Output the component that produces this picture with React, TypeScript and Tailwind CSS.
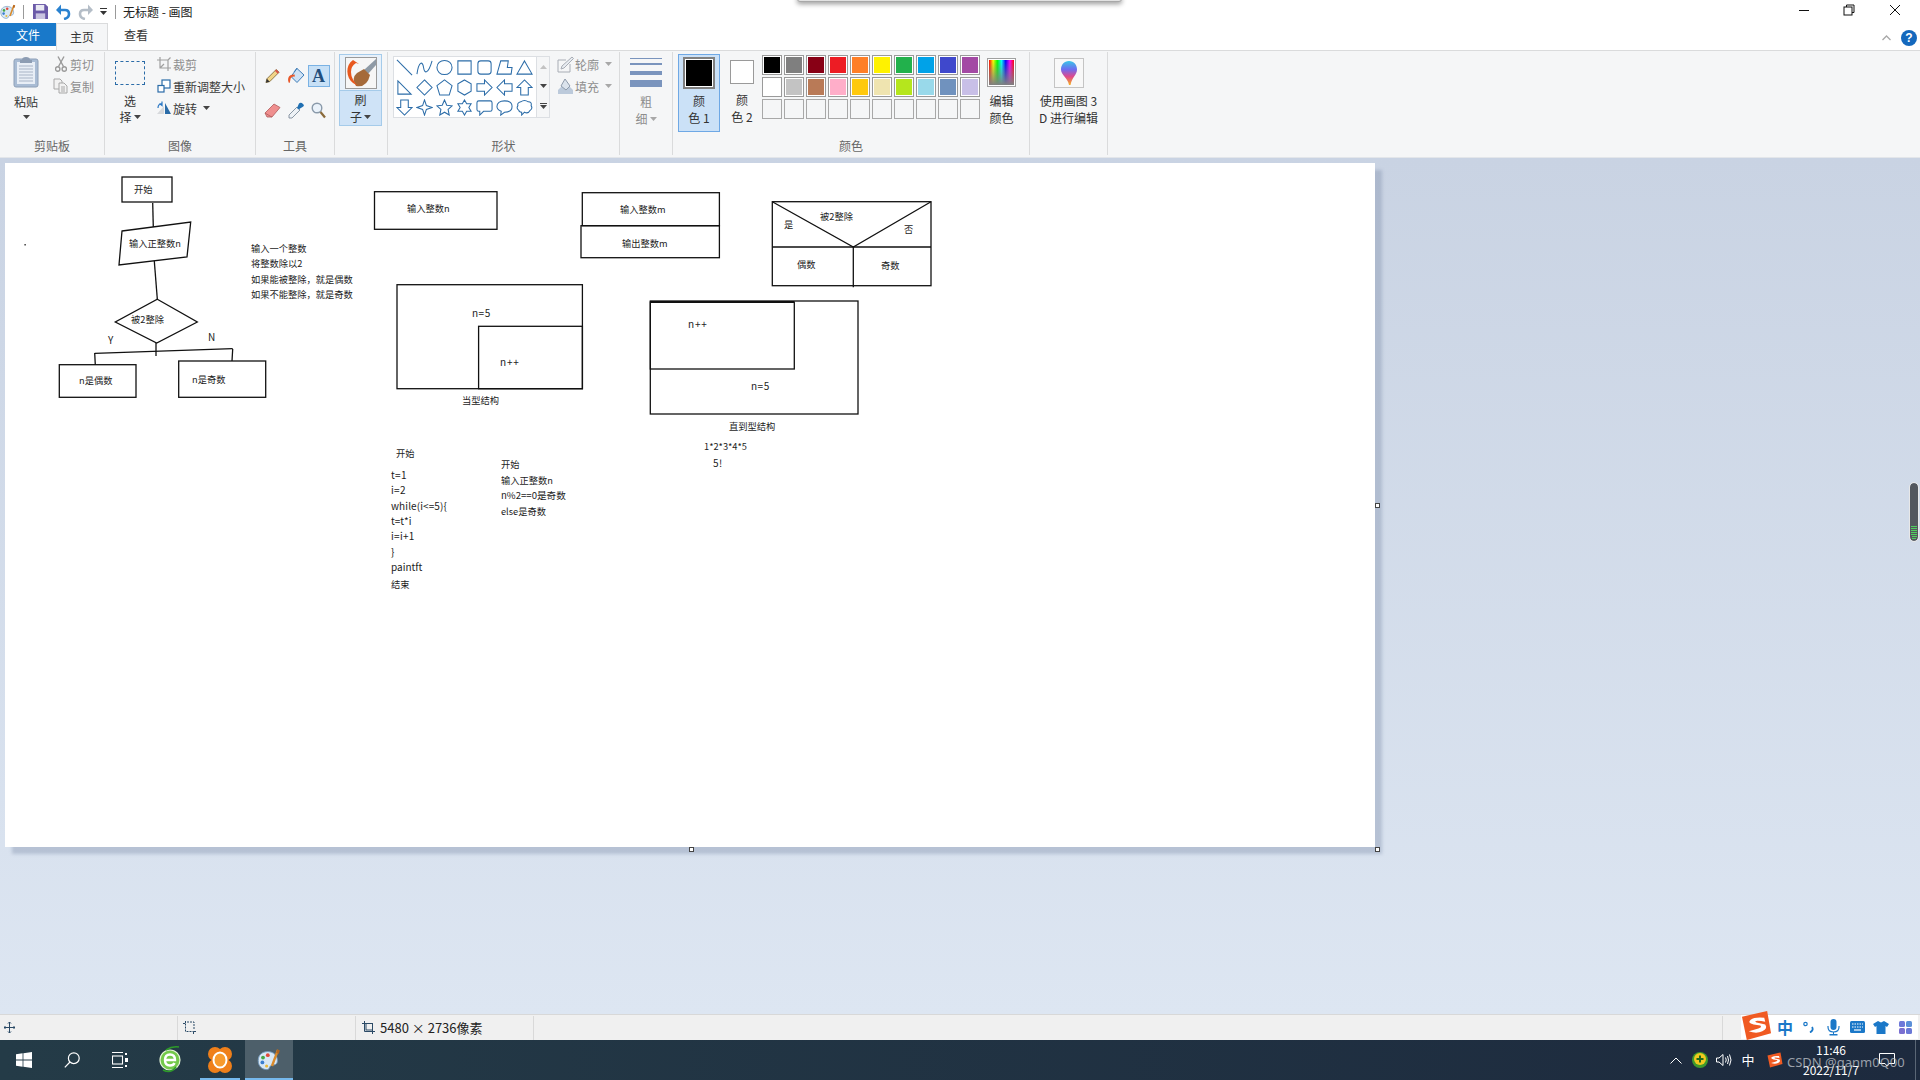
import React from "react";

const BLUE = "#2b6ca8";
const Caret = ({ c = "#444" }: { c?: string }) => (
  <svg width="7" height="4" viewBox="0 0 7 4" className="inline-block"><path d="M0 0H7L3.5 4Z" fill={c} /></svg>
);

const AppIcon = ({ size = 16 }: { size?: number }) => (
  <svg width={size} height={size} viewBox="0 0 20 20">
    <path d="M9 3C4 3 1 6 1 10.5S4 18 8 18c3 0 2-3 4-3.5s5 0 5-4S14 3 9 3Z" fill="#d8e8f5" stroke="#6f94b8" strokeWidth="0.8" />
    <circle cx="5" cy="8" r="1.6" fill="#46a546" />
    <circle cx="9" cy="6" r="1.6" fill="#e04a3a" />
    <circle cx="4.5" cy="12" r="1.6" fill="#3b7fd0" />
    <circle cx="8" cy="15" r="1.3" fill="#e9b93a" />
    <path d="M17.5 1.5L12.5 15" stroke="#d98a2b" strokeWidth="2" />
    <path d="M17 1L19 2L18 5L16 4Z" fill="#b5651d" />
  </svg>
);

const Group = ({ w, label, children }: { w: string; label?: string; children: React.ReactNode }) => (
  <div className={`${w} h-[103px] mt-[1px] border-r border-[#dadbdc] flex flex-col shrink-0`}>
    <div className="h-[87px] flex">{children}</div>
    {label ? <div className="h-[16px] leading-[14px] text-center text-[12px] text-[#666666]">{label}</div> : null}
  </div>
);

const SmallRow = ({ icon, text, off, caret }: { icon: React.ReactNode; text: string; off?: boolean; caret?: boolean }) => (
  <div className={`h-[22px] flex items-center whitespace-nowrap ${off ? "text-[#8e8e8e]" : "text-[#3b3b3b]"}`}>
    <span className="w-[17px] flex justify-center shrink-0">{icon}</span>
    <span className="ml-[1px]">{text}</span>
    {caret ? <span className="ml-[6px] flex items-center"><Caret c={off ? "#a8a8a8" : "#444"} /></span> : null}
  </div>
);

const shapes = [
  "M1 1L17 17",
  "M1 16C3 2 7 2 8 9S13 16 17 2",
  "M9 1.5C13.5 1.5 17 4.8 17 9S13.5 16.5 9 16.5S1 13.2 1 9S4.5 1.5 9 1.5Z",
  "M2 2H16V16H2Z",
  "M5 2H13Q16 2 16 5V13Q16 16 13 16H5Q2 16 2 13V5Q2 2 5 2Z",
  "M5 2H13L12 9H17L16 16H1Z",
  "M9 2L17 16H1Z",
  "M2 2L16 16H2Z",
  "M9 1L17 9L9 17L1 9Z",
  "M9 1L17 7L14 17H4L1 7Z",
  "M9 1L16 5V13L9 17L2 13V5Z",
  "M1 5H9V1L17 9L9 17V13H1Z",
  "M17 5H9V1L1 9L9 17V13H17Z",
  "M5 17V9H1L9 1L17 9H13V17Z",
  "M5 1V9H1L9 17L17 9H13V1Z",
  "M9 1L11 7L17 9L11 11L9 17L7 11L1 9L7 7Z",
  "M9 1L11.4 6.6L17 7.2L12.8 11L14 17L9 14L4 17L5.2 11L1 7.2L6.6 6.6Z",
  "M9 1L11.3 5H16L13.6 9L16 13H11.3L9 17L6.7 13H2L4.4 9L2 5H6.7Z",
  "M3 2H15Q17 2 17 4V11Q17 13 15 13H8L4 17V13H3Q1 13 1 11V4Q1 2 3 2Z",
  "M9 2C14 2 17 4.5 17 8S14 14 9 14L5 17L5.5 13C3 12 1 10 1 8C1 4.5 4 2 9 2Z",
  "M5 3Q9 0 13 3Q17 3 16 7Q18 10 15 12Q13 16 9 14L6 17L6 14Q3 14 3 12Q0 10 2 7Q1 4 5 3Z",
];

const row1 = ["#000000", "#7f7f7f", "#880015", "#ed1c24", "#ff7f27", "#fff200", "#22b14c", "#00a2e8", "#3f48cc", "#a349a4"];
const row2 = ["#ffffff", "#c3c3c3", "#b97a57", "#ffaec9", "#ffc90e", "#efe4b0", "#b5e61d", "#99d9ea", "#7092be", "#c8bfe7"];
const empties = ["a", "b", "c", "d", "e", "f", "g", "h", "i", "j"];

const PasteIcon = () => (
  <svg width="26" height="32" viewBox="0 0 26 32">
    <rect x="1" y="3" width="24" height="28" rx="2" fill="#a9bcd4" stroke="#8ea0b8" />
    <rect x="4" y="6" width="18" height="22" fill="#e8eef6" />
    <path d="M6 10H20M6 13H20M6 16H20M6 19H20M6 22H20M6 25H20" stroke="#a8b4c6" strokeWidth="1" />
    <path d="M9 4Q9 1 13 1T17 4L19 4V7H7V4Z" fill="#8d9db3" />
  </svg>
);

const Scissors = () => (
  <svg width="12" height="16" viewBox="0 0 12 16" fill="none" stroke="#9a9a9a" strokeWidth="1.4">
    <path d="M3 0.5L8.5 10.5M9 0.5L3.5 10.5" />
    <circle cx="2.7" cy="13" r="2.2" />
    <circle cx="9.3" cy="13" r="2.2" />
  </svg>
);
const CopyIcon = () => (
  <svg width="15" height="16" viewBox="0 0 15 16" fill="#f2f2f2" stroke="#a8a8a8">
    <path d="M1 1H7L9 3V11H1Z" />
    <path d="M6 5H11L14 8V15H6Z" />
    <path d="M8 9H12M8 11H12M8 13H12" />
  </svg>
);
const CropIcon = () => (
  <svg width="14" height="14" viewBox="0 0 14 14" fill="none" stroke="#a0a0a0" strokeWidth="1.2">
    <path d="M3 0V11H14M0 3H11V14M11 3L13.5 0.5M3 11L7 7" />
  </svg>
);
const ResizeIcon = () => (
  <svg width="14" height="14" viewBox="0 0 14 14" fill="#fff" stroke="#2b6ca8" strokeWidth="1.2">
    <rect x="5" y="1" width="8" height="8" />
    <rect x="1" y="6.5" width="6" height="6.5" />
  </svg>
);
const RotateIcon = () => (
  <svg width="16" height="14" viewBox="0 0 16 14">
    <path d="M9 2L15 13H9Z" fill="#2b6ca8" />
    <path d="M8 13H1L8 5Z" fill="#d7d9dc" />
    <path d="M2 7Q2 3 6 2.5M6 0.5V4.5L3.5 2.5" stroke="#2b78c4" strokeWidth="1.2" fill="none" />
  </svg>
);
const Pencil = () => (
  <svg width="15" height="16" viewBox="0 0 16 16">
    <path d="M12 1L15 4L5 14L1 15L2 11Z" fill="#f1d489" stroke="#6e5a2e" strokeWidth="0.8" />
    <path d="M12 1L15 4L13.5 5.5L10.5 2.5Z" fill="#d9534a" />
    <path d="M2 11L5 14L1 15Z" fill="#333" />
  </svg>
);
const Bucket = () => (
  <svg width="18" height="18" viewBox="0 0 18 18">
    <path d="M10 1.5L17 8L10 15.5L4 9.5Z" fill="#cfe2f5" stroke="#3f7db8" />
    <path d="M7 5L10 1" stroke="#3f7db8" />
    <path d="M1.5 15C0 10 3 7 7.5 7.5L8 9.5Q4 9 3.5 12T2.8 15.5Q2 16.5 1.5 15Z" fill="#e8582a" />
  </svg>
);
const AIcon = () => (
  <span className="w-[22px] h-[22px] bg-[#c7e0f6] border border-[#7ab2e4] flex items-center justify-center text-[18px] font-bold text-[#1f4e7d] [font-family:'Liberation_Serif',serif] leading-none">A</span>
);
const Eraser = () => (
  <svg width="17" height="15" viewBox="0 0 17 15">
    <path d="M10 1L16 4.5L8 14H3L1 10Z" fill="#ef8f8f" stroke="#b05a5a" strokeWidth="0.8" />
    <path d="M1 10L6 13L8 14" stroke="#b05a5a" fill="none" strokeWidth="0.8" />
  </svg>
);
const Dropper = () => (
  <svg width="16" height="17" viewBox="0 0 16 17">
    <path d="M9 5L12 8L4 16H1V13Z" fill="#eef2f6" stroke="#6e7f90" strokeWidth="0.8" />
    <path d="M9 6L11 1.5Q13 0 15 2T14.5 5L10.5 7.5Z" fill="#1f6fb2" />
  </svg>
);
const Magnifier = () => (
  <svg width="15" height="17" viewBox="0 0 15 17" fill="none">
    <circle cx="6" cy="6" r="4.8" fill="#eaf2fa" stroke="#8a9aaa" strokeWidth="1.4" />
    <path d="M9.5 10L14 15.5" stroke="#8a6a3a" strokeWidth="2.2" />
  </svg>
);
const BrushIcon = () => (
  <svg width="32" height="32" viewBox="0 0 32 32">
    <rect x="0.5" y="0.5" width="31" height="31" fill="#f6f6f6" stroke="#9a9a9a" />
    <path d="M31 2L19 13L23 17L31 8Z" fill="#8e9aa6" />
    <path d="M19 12L12 16Q6 21 11 29Q22 31 25 18Z" fill="#a56a3a" />
    <path d="M8 3C0 8 1 21 8 26L13 29Q6 22 6 15Q6 9 11 6L14 7Z" fill="#e8581e" />
  </svg>
);
const OutlineIcon = () => (
  <svg width="17" height="17" viewBox="0 0 17 17" fill="none" stroke="#a8adb5">
    <path d="M1 4H9M1 4V16H13V8" />
    <path d="M15 1L16.5 2.5L7 12L4 13L5 10Z" fill="#e8ecf1" />
  </svg>
);
const FillIcon = () => (
  <svg width="17" height="17" viewBox="0 0 17 17">
    <path d="M1 16V12L4 9H13L16 12V16Z" fill="#bccadb" />
    <path d="M8 1L13 8L9 12L4 8Z" fill="#dbe3ec" stroke="#8e9bab" />
  </svg>
);
const Balloon = () => (
  <svg width="18" height="26" viewBox="0 0 18 26">
    <defs>
      <linearGradient id="bal" x1="0" y1="0" x2="0" y2="1">
        <stop offset="0" stopColor="#39c6e8" />
        <stop offset="0.35" stopColor="#6e6cf0" />
        <stop offset="0.65" stopColor="#e0488c" />
        <stop offset="1" stopColor="#f5b21e" />
      </linearGradient>
    </defs>
    <path d="M9 1C14 1 17 5 17 9.5C17 15 12 17 10.5 25H9C8 18 1 15 1 9.5C1 5 4 1 9 1Z" fill="url(#bal)" />
  </svg>
);

const SogouS = ({ size }: { size: number }) => (
  <svg width={size} height={size} viewBox="0 0 32 32">
    <path d="M1 7L27 1L31 24L6 31Z" fill="#f05a22" />
    <path d="M24 8Q14 7 10 10T13 15L20 16Q22 18 18 19T8 22Q16 25 22 22T25 15L16 13Q13 11 17 11T25 12Z" fill="#ffffff" />
  </svg>
);

const T = ({ x, y, s, size = 9.25, ls = 0 }: { x: number; y: number; s: string; size?: number; ls?: number }) => (
  <text x={x} y={y + 3.4} fontSize={size} letterSpacing={ls} fill="#1c1c1c">{s}</text>
);
const Rect = ({ x1, y1, x2, y2, w = 1.3 }: { x1: number; y1: number; x2: number; y2: number; w?: number }) => (
  <rect x={x1} y={y1} width={x2 - x1} height={y2 - y1} fill="none" stroke="#111" strokeWidth={w} />
);

const Diagram = () => (
  <svg className="block" width="1370" height="684" viewBox="5 163 1370 684" fontFamily="'Noto Sans CJK SC','Noto Sans',sans-serif">
    <g fill="none" stroke="#111" strokeWidth="1.3">
      <path d="M152.7 203L153.3 227" />
      <path d="M122 231L190.7 222L187 257L119 265Z" />
      <path d="M154.3 261L157.3 299" />
      <path d="M157.3 299.3L197.3 322L156.7 343L115.3 322Z" />
      <path d="M156 343V356" />
      <path d="M94.7 353.3L232.7 348.7" />
      <path d="M94.7 353L95.3 365M232.7 349L232 361" />
      <path d="M772.3 201.7L853.3 247L931 201.7" />
      <path d="M772.3 247H931M853.3 247V287.3" />
      <path d="M650.3 302H794" strokeWidth="2" />
    </g>
    <Rect x1={122} y1={177} x2={172} y2={202} />
    <Rect x1={59.3} y1={364.7} x2={136} y2={397.3} />
    <Rect x1={178.7} y1={361} x2={265.7} y2={397.3} />
    <Rect x1={374.5} y1={191.7} x2={497} y2={229.3} />
    <Rect x1={582.3} y1={192.7} x2={719.4} y2={225.7} />
    <Rect x1={581} y1={225.7} x2={719.4} y2={257.7} />
    <Rect x1={772.3} y1={201.7} x2={931} y2={285.7} />
    <Rect x1={397} y1={284.7} x2={582.4} y2={388.7} />
    <Rect x1={478.6} y1={326.3} x2={582.4} y2={388.7} />
    <Rect x1={650.3} y1={301} x2={858} y2={414} />
    <Rect x1={650.3} y1={302} x2={794.3} y2={369} />
    <rect x="24.5" y="244" width="1.2" height="1.5" fill="#111" />

    <T x={134} y={190} s="开始" />
    <T x={129} y={244} s="输入正整数n" />
    <T x={131} y={320} s="被2整除" />
    <T x={108} y={341} s="Y" size={10} />
    <T x={208} y={338} s="N" size={10} />
    <T x={79} y={381} s="n是偶数" />
    <T x={192} y={380} s="n是奇数" />
    <T x={251} y={248.5} s="输入一个整数" />
    <T x={251} y={264} s="将整数除以2" />
    <T x={251} y={280} s="如果能被整除，就是偶数" />
    <T x={251} y={295} s="如果不能整除，就是奇数" />
    <T x={407} y={209} s="输入整数n" />
    <T x={620} y={210} s="输入整数m" />
    <T x={622} y={244} s="输出整数m" />
    <T x={820} y={217} s="被2整除" />
    <T x={784} y={225} s="是" />
    <T x={904} y={230} s="否" />
    <T x={797} y={265} s="偶数" />
    <T x={881} y={266} s="奇数" />
    <T x={472} y={314} s="n=5" size={10} ls={0.5} />
    <T x={500} y={363} s="n++" size={10} ls={0.8} />
    <T x={462} y={401} s="当型结构" />
    <T x={688} y={325} s="n++" size={10} ls={0.8} />
    <T x={751} y={387} s="n=5" size={10} ls={0.5} />
    <T x={729} y={427} s="直到型结构" />
    <T x={704} y={447} s="1*2*3*4*5" />
    <T x={713} y={464} s="5!" size={10} ls={0.5} />
    <T x={396} y={454} s="开始" />
    <T x={391} y={476} s="t=1" size={10} ls={0.3} />
    <T x={391} y={491} s="i=2" size={10} ls={0.3} />
    <T x={391} y={507} s="while(i<=5){" size={10} ls={0.1} />
    <T x={391} y={522} s="t=t*i" size={10} />
    <T x={391} y={537} s="i=i+1" size={10} ls={0.3} />
    <T x={391} y={553} s="}" size={10} />
    <T x={391} y={568} s="paintft" size={10} />
    <T x={391} y={585} s="结束" />
    <T x={501} y={465} s="开始" />
    <T x={501} y={481} s="输入正整数n" />
    <T x={501} y={496} s="n%2==0是奇数" size={9.6} />
    <T x={501} y={512} s="else是奇数" />
  </svg>
);

const Handle = ({ cls }: { cls: string }) => (
  <div className={`absolute w-[5px] h-[5px] bg-white border border-[#444] ${cls}`} />
);

export default function App() {
  return (
    <div className="w-[1920px] h-[1080px] overflow-hidden flex flex-col bg-white relative text-[12px] text-[#3b3b3b] [font-family:'Noto_Sans_CJK_SC','Noto_Sans',sans-serif]">
      {/* Title bar */}
      <div className="h-[23px] flex items-center shrink-0 relative">
        <span className="w-[23px] flex"><AppIcon /></span>
        <span className="w-px h-[14px] bg-[#9a9a9a]" />
        <svg className="ml-[9px]" width="15" height="15" viewBox="0 0 16 16">
          <path d="M0 0H13L16 3V16H0Z" fill="#6b5aa8" />
          <rect x="3" y="1" width="9" height="6" fill="#e8e8f2" />
          <rect x="3" y="10" width="10" height="6" fill="#c9c4e0" />
        </svg>
        <svg className="ml-[8px]" width="15" height="16" viewBox="0 0 15 16" fill="none">
          <path d="M2 6H9Q13 6 13 10T8 15" stroke="#2a82d0" strokeWidth="2.6" />
          <path d="M5 0.5V11L0 6Z" fill="#2a82d0" />
        </svg>
        <svg className="ml-[7px]" width="15" height="16" viewBox="0 0 15 16" fill="none">
          <path d="M13 6H6Q2 6 2 10T7 15" stroke="#b4bdc7" strokeWidth="2.6" />
          <path d="M10 0.5V11L15 6Z" fill="#b4bdc7" />
        </svg>
        <span className="ml-[7px] flex flex-col items-center gap-[2px] w-[7px]">
          <span className="w-[7px] h-px bg-[#333]" />
          <Caret c="#333" />
        </span>
        <span className="ml-[8px] w-px h-[14px] bg-[#9a9a9a]" />
        <span className="ml-[7px] text-[12px] text-[#222]">无标题 - 画图</span>
        <div className="ml-auto flex items-center h-[23px] pb-[3px]">
          <svg width="12" height="12" viewBox="0 0 12 12"><path d="M1 6.5H11" stroke="#111" strokeWidth="1" /></svg>
          <svg className="ml-[33px]" width="12" height="12" viewBox="0 0 12 12" fill="none" stroke="#111">
            <rect x="1" y="3" width="8" height="8" />
            <path d="M3.5 3V1H11V8.5H9" />
          </svg>
          <svg className="ml-[34px] mr-[19px]" width="12" height="12" viewBox="0 0 12 12"><path d="M1 1L11 11M11 1L1 11" stroke="#111" /></svg>
        </div>
        <div className="absolute left-[797px] top-[-4px] w-[325px] h-[6px] bg-[#e2e2e2] border border-[#a8a8a8] rounded-b-[3px] shadow-[0_2px_5px_rgba(0,0,0,0.4)]" />
      </div>

      {/* Tabs */}
      <div className="h-[27px] flex items-start shrink-0 relative">
        <div className="w-[56px] h-[23px] bg-[#1979ca] text-white flex items-center justify-center text-[12px]">文件</div>
        <div className="w-[52px] h-[27px] bg-[#f5f6f7] border border-b-0 border-[#dadbdc] flex items-center justify-center text-[12px] text-[#333] relative z-10">主页</div>
        <div className="w-[56px] h-[23px] flex items-center justify-center text-[12px] text-[#333]">查看</div>
        <div className="ml-auto flex items-center h-[26px] pt-[3px]">
          <svg width="9" height="6" viewBox="0 0 9 6"><path d="M0.5 5L4.5 1L8.5 5" fill="none" stroke="#a8a8a8" strokeWidth="1.3" /></svg>
          <span className="ml-[10px] mr-[3px] w-[16px] h-[16px] rounded-full bg-[#1468bd] text-white text-[12px] font-bold flex items-center justify-center leading-none [font-family:'Liberation_Sans',sans-serif]">?</span>
        </div>
      </div>

      {/* Ribbon */}
      <div className="h-[108px] shrink-0 bg-[#f5f6f7] border-t border-[#dadbdc] border-b border-b-[#e3e6ea] flex text-[12px] leading-[17px]">
        <Group w="w-[105px]" label="剪贴板">
          <div className="w-[52px] flex flex-col items-center pt-[4px]">
            <PasteIcon />
            <span className="mt-[5px] text-[#333]">粘贴</span>
            <span className="mt-[5px] flex"><Caret /></span>
          </div>
          <div className="pt-[1px]">
            <SmallRow off icon={<Scissors />} text="剪切" />
            <SmallRow off icon={<CopyIcon />} text="复制" />
          </div>
        </Group>
        <Group w="w-[151px]" label="图像">
          <div className="w-[50px] flex flex-col items-center pt-[9px] leading-[16px] text-[#333]">
            <div className="w-[30px] h-[24px] border border-dashed border-[#2b6ca8]" />
            <span className="mt-[8px]">选</span>
            <span className="flex items-center gap-[2px]">择<Caret /></span>
          </div>
          <div className="pt-[1px]">
            <SmallRow off icon={<CropIcon />} text="裁剪" />
            <SmallRow icon={<ResizeIcon />} text="重新调整大小" />
            <SmallRow icon={<RotateIcon />} text="旋转" caret />
          </div>
        </Group>
        <Group w="w-[79px]" label="工具">
          <div className="pl-[5px] pt-[7px] grid grid-cols-[23px_23px_23px] grid-rows-[34px_34px] items-center justify-items-center">
            <Pencil />
            <Bucket />
            <AIcon />
            <Eraser />
            <Dropper />
            <Magnifier />
          </div>
        </Group>
        <Group w="w-[53px]">
          <div className="ml-[4px] mt-[2px] w-[43px] h-[72px] border border-[#a5cbea] flex flex-col">
            <div className="h-[36px] flex items-center justify-center bg-[#e8f1fa] border-b border-[#a5cbea]"><BrushIcon /></div>
            <div className="flex-1 bg-[#cfe3f7] flex flex-col items-center leading-[17px] text-[#333]">
              <span>刷</span>
              <span className="flex items-center gap-[2px]">子<Caret /></span>
            </div>
          </div>
        </Group>
        <Group w="w-[232px]" label="形状">
          <div className="ml-[5px] mt-[4px] h-[62px] w-[157px] flex border border-[#dcdfe3]">
            <div className="w-[142px] bg-white grid grid-cols-[repeat(7,20px)] auto-rows-[20px]">
              {shapes.map((d) => (
                <span key={d} className="flex items-center justify-center">
                  <svg width="17" height="17" viewBox="0 0 18 18"><path d={d} fill="none" stroke={BLUE} strokeWidth="1.1" /></svg>
                </span>
              ))}
            </div>
            <div className="flex-1 border-l border-[#dcdfe3] flex flex-col items-center justify-around">
              <svg width="7" height="4" viewBox="0 0 7 4"><path d="M0 4H7L3.5 0Z" fill="#c2c2c2" /></svg>
              <Caret />
              <span className="flex flex-col items-center gap-[1px]"><span className="w-[7px] h-px bg-[#444]" /><Caret /></span>
            </div>
          </div>
          <div className="ml-[7px] pt-[1px]">
            <SmallRow off icon={<OutlineIcon />} text="轮廓" caret />
            <SmallRow off icon={<FillIcon />} text="填充" caret />
          </div>
        </Group>
        <Group w="w-[53px]">
          <div className="w-full flex flex-col">
            <div className="ml-[10px] w-[32px] mt-[6px] flex flex-col">
              <span className="h-px bg-[#7a94bd]" />
              <span className="h-[2px] mt-[4px] bg-[#7a94bd]" />
              <span className="h-[4px] mt-[6px] bg-[#7a94bd]" />
              <span className="h-[7px] mt-[5px] bg-[#7a94bd]" />
            </div>
            <span className="mt-[6px] text-center text-[#8e8e8e] leading-[17px]">粗</span>
            <span className="text-center text-[#8e8e8e] leading-[17px] flex items-center justify-center gap-[2px]">细<Caret c="#a8a8a8" /></span>
          </div>
        </Group>
        <Group w="w-[357px]" label="颜色">
          <div className="ml-[5px] mt-[2px] w-[42px] h-[78px] bg-[#cbe1f7] border border-[#6ea8e5] flex flex-col items-center pt-[2px]">
            <div className="w-[32px] h-[32px] bg-black border-2 border-[#808080] shadow-[inset_0_0_0_1px_#fff]" />
            <span className="mt-[3px] leading-[17px] text-[#333]">颜</span>
            <span className="leading-[17px] text-[#333]">色 1</span>
          </div>
          <div className="w-[40px] ml-[2px] flex flex-col items-center pt-[8px]">
            <div className="w-[24px] h-[24px] bg-white border border-[#9a9a9a]" />
            <span className="mt-[7px] leading-[17px] text-[#333]">颜</span>
            <span className="leading-[17px] text-[#333]">色 2</span>
          </div>
          <div className="mt-[3px] grid grid-cols-[repeat(10,22px)] auto-rows-[22px]">
            {row1.concat(row2).map((c, i) => (
              <span key={c + i} className="w-[20px] h-[20px] border border-[#9a9a9a] p-px bg-white">
                <span className="block w-full h-full" style={{ background: c }} />
              </span>
            ))}
            {empties.map((k) => (
              <span key={k} className="w-[20px] h-[20px] border border-[#a8a8a8] bg-[#f5f6f7]" />
            ))}
          </div>
          <div className="ml-[2px] w-[35px] flex flex-col items-center pt-[6px]">
            <div className="w-[29px] h-[29px] border border-[#a0a0a0] p-px bg-white">
              <div className="w-full h-full bg-[linear-gradient(to_bottom,transparent,#808080),linear-gradient(to_right,#f00,#ff0,#0f0,#0ff,#00f,#f0f,#f00)]" />
            </div>
            <span className="mt-[5px] leading-[17px] text-[#333]">编辑</span>
            <span className="leading-[17px] text-[#333]">颜色</span>
          </div>
        </Group>
        <Group w="w-[78px]">
          <div className="w-full flex flex-col items-center pt-[6px] text-[#333]">
            <div className="w-[30px] h-[30px] bg-[#f8f8f8] border border-[#c4c4c4] flex items-center justify-center"><Balloon /></div>
            <span className="mt-[4px] leading-[17px] whitespace-nowrap">使用画图 3</span>
            <span className="leading-[17px] whitespace-nowrap">D 进行编辑</span>
          </div>
        </Group>
      </div>

      {/* Work area */}
      <div className="flex-1 relative overflow-hidden bg-linear-to-b from-[#c9d3e3] to-[#dde6f2] pl-[5px] pt-[5px]">
        <div className="relative w-[1370px] h-[684px] bg-white shadow-[7px_7px_3px_rgba(130,146,172,0.4)]">
          <Diagram />
          <Handle cls="left-[1370px] top-[340px]" />
          <Handle cls="left-[684px] top-[684px]" />
          <Handle cls="left-[1370px] top-[684px]" />
        </div>
        <div className="absolute left-[1910px] top-[325px] w-[8px] h-[58px] rounded-[4px] bg-[#53575e] outline outline-1 outline-[#e8e8e8] flex flex-col justify-end items-center gap-[1px] pb-[2px]">
          <span className="w-[6px] h-px bg-[#4fd05f]" />
          <span className="w-[6px] h-px bg-[#4fd05f]" />
          <span className="w-[6px] h-px bg-[#4fd05f]" />
          <span className="w-[6px] h-px bg-[#4fd05f]" />
          <span className="w-[6px] h-px bg-[#4fd05f]" />
          <span className="w-[5px] h-px bg-[#4fd05f]" />
          <span className="w-[4px] h-px bg-[#4fd05f]" />
        </div>
      </div>

      {/* Status bar */}
      <div className="h-[26px] shrink-0 bg-[#f0f0f0] border-t border-[#d8d8d8] flex items-center relative text-[#222]">
        <div className="w-[178px] h-[24px] border-r border-[#d9d9d9] flex items-center pl-[4px]">
          <svg width="11" height="11" viewBox="0 0 11 11" fill="none" stroke="#2b4a66"><path d="M5.5 0V11M0 5.5H11M4 1.5L5.5 0L7 1.5M4 9.5L5.5 11L7 9.5M1.5 4L0 5.5L1.5 7M9.5 4L11 5.5L9.5 7" /></svg>
        </div>
        <div className="w-[178px] h-[24px] border-r border-[#d9d9d9] flex items-center pl-[5px]">
          <svg width="13" height="13" viewBox="0 0 13 13" fill="none" stroke="#2b4a66"><path d="M0 2.5H2.5V0M2.5 2.5V10.5H10.5M4 1H11V9" strokeDasharray="2 1" /><path d="M10.5 13V10.5H13" /></svg>
        </div>
        <div className="w-[178px] h-[24px] border-r border-[#d9d9d9] flex items-center pl-[6px]">
          <svg width="13" height="13" viewBox="0 0 13 13" fill="none" stroke="#2b4a66"><path d="M2.5 0V10.5H13M0 2.5H10.5V13" /><rect x="4" y="2.5" width="6.5" height="6.5" /></svg>
          <span className="ml-[5px] text-[13px] whitespace-nowrap leading-none">5480 × 2736像素</span>
        </div>
        <div className="ml-[1188px] w-px h-[24px] bg-[#d9d9d9]" />
        <div className="absolute left-[1741px] top-0 w-[177px] h-[24px] bg-white flex items-center pl-[32px]">
          <span className="w-[24px] flex justify-center text-[16px] font-bold text-[#1b78c8] leading-none">中</span>
          <span className="w-[24px] flex justify-center">
            <svg width="12" height="12" viewBox="0 0 12 12"><circle cx="2.5" cy="3" r="1.7" fill="none" stroke="#1b78c8" strokeWidth="1.2" /><path d="M9 6Q11 9 7 11.5" stroke="#1b78c8" strokeWidth="1.8" fill="none" /></svg>
          </span>
          <span className="w-[24px] flex justify-center">
            <svg width="13" height="17" viewBox="0 0 13 17" fill="#1b78c8"><rect x="3.5" y="0" width="6" height="11" rx="3" /><path d="M1 7V8Q1 13 6.5 13T12 8V7" fill="none" stroke="#1b78c8" strokeWidth="1.2" /><rect x="2.5" y="15" width="8" height="1.5" /><rect x="6" y="13" width="1" height="3" /></svg>
          </span>
          <span className="w-[24px] flex justify-center">
            <svg width="15" height="12" viewBox="0 0 15 12"><rect width="15" height="12" rx="1.5" fill="#1b78c8" /><path d="M2 3H13M2 6H13" stroke="#fff" strokeDasharray="1.5 1" /><path d="M4 9H11" stroke="#fff" strokeWidth="1.2" /></svg>
          </span>
          <span className="w-[24px] flex justify-center">
            <svg width="16" height="13" viewBox="0 0 16 13"><path d="M5 0L8 1.5L11 0L16 3L14 6L12.5 5V13H3.5V5L2 6L0 3Z" fill="#1b78c8" /></svg>
          </span>
          <span className="w-[24px] flex justify-center">
            <span className="grid grid-cols-2 gap-[1px]">
              <span className="w-[6px] h-[6px] rounded-[1.5px] bg-[#6e79d9]" />
              <span className="w-[6px] h-[6px] rounded-[1.5px] bg-[#5b8fd8]" />
              <span className="w-[6px] h-[6px] rounded-[1.5px] bg-[#7a6fd0]" />
              <span className="w-[6px] h-[6px] rounded-[1.5px] bg-[#6a78d6]" />
            </span>
          </span>
        </div>
        <div className="absolute left-[1741px] top-[-5px]"><SogouS size={31} /></div>
      </div>

      {/* Taskbar */}
      <div className="h-[40px] shrink-0 flex items-center text-white bg-linear-to-r from-[#243b47] to-[#1d2a3e] relative">
        <span className="w-[48px] h-full flex items-center justify-center">
          <svg width="16" height="16" viewBox="0 0 16 16" fill="#fff"><path d="M0 2.3L6.6 1.3V7.6H0ZM7.4 1.2L16 0V7.6H7.4ZM0 8.4H6.6V14.7L0 13.7ZM7.4 8.4H16V16L7.4 14.8Z" /></svg>
        </span>
        <span className="w-[48px] h-full flex items-center justify-center">
          <svg width="16" height="16" viewBox="0 0 16 16" fill="none" stroke="#fff" strokeWidth="1.2"><circle cx="9.8" cy="6.2" r="5.4" /><path d="M6 10L0.8 15.4" /></svg>
        </span>
        <span className="w-[48px] h-full flex items-center justify-center">
          <svg width="16" height="16" viewBox="0 0 16 16" fill="none" stroke="#fff" strokeWidth="1.1"><path d="M0 0.5H11M0 15.5H11" /><rect x="0.5" y="4" width="10" height="8" /><rect x="13" y="1" width="2" height="2" fill="#fff" stroke="none" /><rect x="13" y="6" width="3" height="4" fill="#fff" stroke="none" /><rect x="13" y="13" width="2" height="2" fill="#fff" stroke="none" /></svg>
        </span>
        <span className="w-[52px] h-full flex items-center justify-center">
          <svg width="22" height="28" viewBox="0 0 22 28">
            <circle cx="11" cy="14" r="10" fill="#74c94a" stroke="#e6f5da" strokeWidth="1.2" />
            <path d="M6 14H16Q16 8.5 11 8.5T6 14Q6 19.5 11 19.5Q14.5 19.5 15.5 17" fill="none" stroke="#ffffff" strokeWidth="2.4" />
            <path d="M4 24Q12 28 17 21M7 4Q13 0 20 1" stroke="#2e9a2a" strokeWidth="1.6" fill="none" />
          </svg>
        </span>
        <span className="ml-[4px] w-[40px] h-full flex items-center justify-center relative">
          <svg width="24" height="28" viewBox="0 0 24 28">
            <circle cx="7" cy="8" r="7" fill="#ef7f1a" />
            <circle cx="17" cy="8" r="7" fill="#ef7f1a" />
            <circle cx="7" cy="20" r="7" fill="#ef7f1a" />
            <circle cx="17" cy="20" r="7" fill="#ef7f1a" />
            <rect x="5" y="6" width="14" height="16" fill="#ef7f1a" />
            <ellipse cx="12" cy="14" rx="6.5" ry="7.5" fill="#f79a2e" stroke="#fff" strokeWidth="2" />
          </svg>
          <span className="absolute left-0 right-0 bottom-0 h-[2px] bg-[#76b9ed]" />
        </span>
        <span className="ml-[5px] w-[48px] h-full bg-[#4d5f6a] flex items-center justify-center relative">
          <AppIcon size={24} />
          <span className="absolute left-0 right-0 bottom-0 h-[2px] bg-[#76b9ed]" />
        </span>
        <div className="ml-auto flex items-center h-full">
          <span className="w-[24px] flex justify-center">
            <svg width="12" height="7" viewBox="0 0 12 7"><path d="M0.5 6.5L6 1L11.5 6.5" fill="none" stroke="#fff" /></svg>
          </span>
          <span className="w-[24px] flex justify-center">
            <svg width="16" height="16" viewBox="0 0 16 16"><circle cx="8" cy="8" r="8" fill="#3f9a2c" /><circle cx="8" cy="7" r="6" fill="#f2c81e" /><path d="M8 3.5V10.5M4.5 7H11.5" stroke="#1f6a1a" strokeWidth="2" /></svg>
          </span>
          <span className="w-[24px] flex justify-center">
            <svg width="16" height="14" viewBox="0 0 16 14" fill="none" stroke="#fff"><path d="M0.5 5H3L7 1.5V12.5L3 9H0.5Z" /><path d="M9.5 4.5Q11 7 9.5 9.5M11.5 3Q13.5 7 11.5 11M13.5 1.5Q16.5 7 13.5 12.5" /></svg>
          </span>
          <span className="w-[24px] text-center text-[13px]">中</span>
          <span className="w-[30px] flex justify-center"><SogouS size={16} /></span>
          <span className="w-[82px] flex flex-col items-center text-[12px] leading-[20px] text-white">
            <span>11:46</span>
            <span>2022/11/7</span>
          </span>
          <span className="w-[30px] flex justify-center">
            <svg width="16" height="14" viewBox="0 0 16 14"><path d="M0.5 0.5H15.5V10.5H10L8 13L6 10.5H0.5Z" fill="none" stroke="#fff" /></svg>
          </span>
          <span className="w-[13px]" />
          <span className="w-px h-full bg-[#5a6675]" />
          <span className="w-[4px]" />
        </div>
        <span className="absolute left-[1787px] top-[13px] text-[13px] leading-[18px] text-[#c4c8ce]/75 whitespace-nowrap [font-family:'Noto_Sans',sans-serif]">CSDN @ganm0Q00</span>
      </div>
    </div>
  );
}
